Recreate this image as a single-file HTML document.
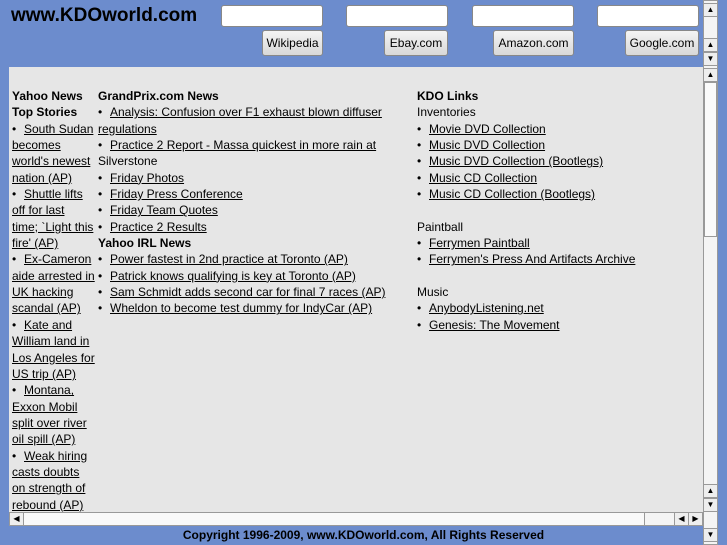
<!DOCTYPE html>
<html><head><style>
body{margin:0;width:727px;height:545px;background:#6c8ccd;font-family:"Liberation Sans",sans-serif;position:relative;overflow:hidden;color:#000}
.logo{position:absolute;left:11px;top:5px;font-size:19px;font-weight:bold}
.in{position:absolute;top:5px;width:100px;height:20px;background:#fff;border:1px solid #888;border-radius:3px}
.btn{position:absolute;top:30px;height:24px;background:linear-gradient(#f4f4f4,#d8d8d8);border:1px solid #888;border-radius:3px;font-size:12px;line-height:24px;text-align:center}
.content{position:absolute;left:9px;top:67px;width:694px;height:445px;background:#e6e6e6;overflow:hidden;font-size:12px;line-height:16.35px}
.col{position:absolute;top:21px}
a{color:#000;text-decoration:underline}
i{font-style:normal;display:inline-block;width:12px}
b{font-weight:bold}
.sb{position:absolute;background:#f2f2f2;border:1px solid #999;box-sizing:border-box}
.ar{position:absolute;width:15px;height:14px;background:#eee;border:1px solid #999;box-sizing:border-box;font-size:8px;line-height:12px;text-align:center}
.foot{position:absolute;top:528px;left:0;width:727px;text-align:center;font-size:12px;font-weight:bold}
</style></head><body>
<div class="logo">www.KDOworld.com</div>
<div class="in" style="left:221px"></div>
<div class="in" style="left:346px"></div>
<div class="in" style="left:472px"></div>
<div class="in" style="left:597px"></div>
<div class="btn" style="left:262px;width:59px">Wikipedia</div>
<div class="btn" style="left:384px;width:62px">Ebay.com</div>
<div class="btn" style="left:493px;width:79px">Amazon.com</div>
<div class="btn" style="left:625px;width:72px">Google.com</div>
<div class="content">
<div class="col" style="left:3px;white-space:nowrap"><b>Yahoo News</b><br><b>Top Stories</b><br><i>•</i><a>South Sudan<br>becomes<br>world's newest<br>nation (AP)</a><br><i>•</i><a>Shuttle lifts<br>off for last<br>time; `Light this<br>fire' (AP)</a><br><i>•</i><a>Ex-Cameron<br>aide arrested in<br>UK hacking<br>scandal (AP)</a><br><i>•</i><a>Kate and<br>William land in<br>Los Angeles for<br>US trip (AP)</a><br><i>•</i><a>Montana,<br>Exxon Mobil<br>split over river<br>oil spill (AP)</a><br><i>•</i><a>Weak hiring<br>casts doubts<br>on strength of<br>rebound (AP)</a></div>
<div class="col" style="left:89px;width:300px"><b>GrandPrix.com News</b><br><i>•</i><a>Analysis: Confusion over F1 exhaust blown diffuser regulations</a><br><i>•</i><a>Practice 2 Report - Massa quickest in more rain at</a> Silverstone<br><i>•</i><a>Friday Photos</a><br><i>•</i><a>Friday Press Conference</a><br><i>•</i><a>Friday Team Quotes</a><br><i>•</i><a>Practice 2 Results</a><br><b>Yahoo IRL News</b><br><i>•</i><a>Power fastest in 2nd practice at Toronto (AP)</a><br><i>•</i><a>Patrick knows qualifying is key at Toronto (AP)</a><br><i>•</i><a>Sam Schmidt adds second car for final 7 races (AP)</a><br><i>•</i><a>Wheldon to become test dummy for IndyCar (AP)</a></div>
<div class="col" style="left:408px;width:280px"><b>KDO Links</b><br>Inventories<br><i>•</i><a>Movie DVD Collection</a><br><i>•</i><a>Music DVD Collection</a><br><i>•</i><a>Music DVD Collection (Bootlegs)</a><br><i>•</i><a>Music CD Collection</a><br><i>•</i><a>Music CD Collection (Bootlegs)</a><br><br>Paintball<br><i>•</i><a>Ferrymen Paintball</a><br><i>•</i><a>Ferrymen's Press And Artifacts Archive</a><br><br>Music<br><i>•</i><a>AnybodyListening.net</a><br><i>•</i><a>Genesis: The Movement</a></div>
</div>
<div class="sb" style="left:703px;top:0;width:15px;height:545px;background:#f4f4f4"></div>
<div class="ar" style="left:703px;top:3px">▲</div>
<div class="ar" style="left:703px;top:38px">▲</div>
<div class="ar" style="left:703px;top:52px">▼</div>
<div class="ar" style="left:703px;top:68px">▲</div>
<div class="sb" style="left:704px;top:82px;width:13px;height:155px;background:#fafafa"></div>
<div class="ar" style="left:703px;top:484px">▲</div>
<div class="ar" style="left:703px;top:498px">▼</div>
<div class="ar" style="left:703px;top:528px">▼</div>
<div class="sb" style="left:9px;top:512px;width:694px;height:14px;background:#f4f4f4"></div>
<div class="sb" style="left:23px;top:512px;width:622px;height:14px;background:#f9f9f9"></div>
<div class="ar" style="left:9px;top:512px">◀</div>
<div class="ar" style="left:674px;top:512px">◀</div>
<div class="ar" style="left:688px;top:512px">▶</div>
<div class="foot">Copyright 1996-2009, www.KDOworld.com, All Rights Reserved</div>
</body></html>
